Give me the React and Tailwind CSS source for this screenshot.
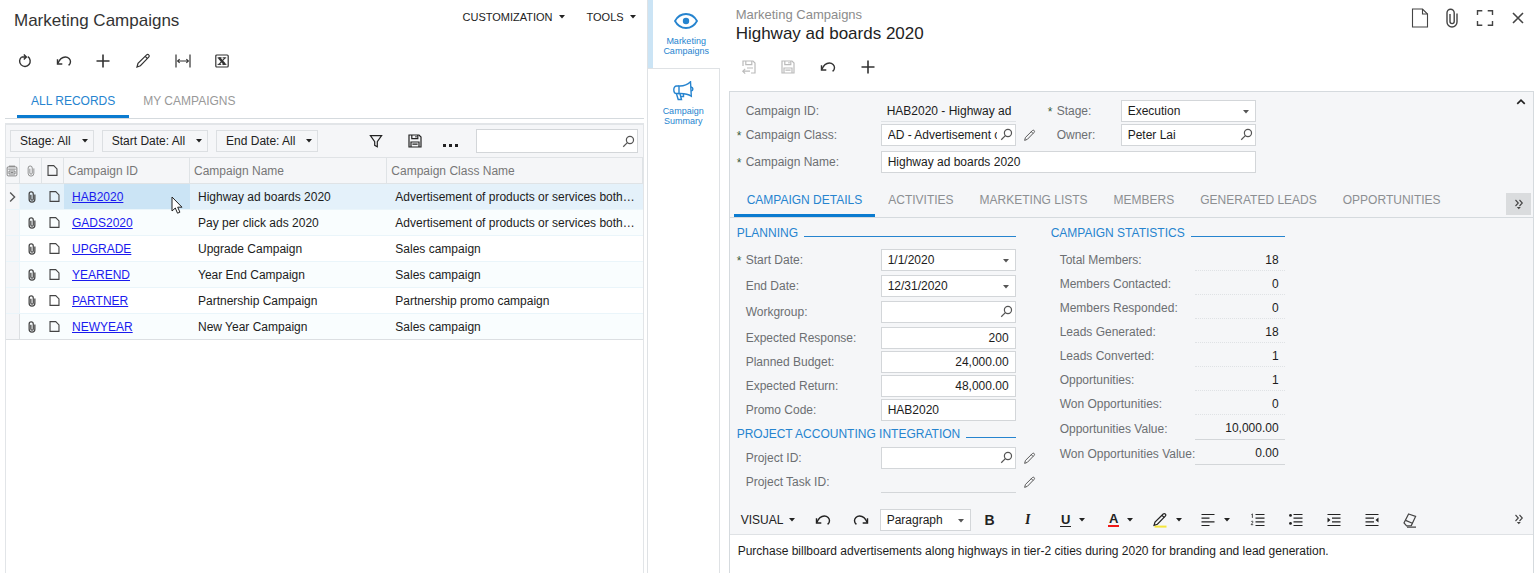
import { useState } from "react"

const campaigns = [
  { id: "HAB2020", name: "Highway ad boards 2020", className: "Advertisement of products or services both…" },
  { id: "GADS2020", name: "Pay per click ads 2020", className: "Advertisement of products or services both…" },
  { id: "UPGRADE", name: "Upgrade Campaign", className: "Sales campaign" },
  { id: "YEAREND", name: "Year End Campaign", className: "Sales campaign" },
  { id: "PARTNER", name: "Partnership Campaign", className: "Partnership promo campaign" },
  { id: "NEWYEAR", name: "New Year Campaign", className: "Sales campaign" },
]

const statistics = [
  { label: "Total Members", value: "18" },
  { label: "Members Contacted", value: "0" },
  { label: "Members Responded", value: "0" },
  { label: "Leads Generated", value: "18" },
  { label: "Leads Converted", value: "1" },
  { label: "Opportunities", value: "1" },
  { label: "Won Opportunities", value: "0" },
  { label: "Opportunities Value", value: "10,000.00", solid: true },
  { label: "Won Opportunities Value", value: "0.00", solid: true },
]

const detailTabs = ["CAMPAIGN DETAILS", "ACTIVITIES", "MARKETING LISTS", "MEMBERS", "GENERATED LEADS", "OPPORTUNITIES"]

/* Icons */

const Icon = ({ size = 16, className = "", children, sw = 1.2 }) => (
  <svg
    width={size}
    height={size}
    viewBox="0 0 16 16"
    fill="none"
    stroke="currentColor"
    strokeWidth={sw}
    className={`shrink-0 ${className}`}
    aria-hidden="true"
  >
    {children}
  </svg>
)

const Caret = ({ className = "" }) => (
  <svg width="6" height="4" viewBox="0 0 6 4" fill="currentColor" className={`shrink-0 ${className}`} aria-hidden="true">
    <path d="M0 0h6L3 3.6z" />
  </svg>
)

const RefreshIcon = () => (
  <Icon sw={1.4}>
    <path d="M4.600 4A5.300 5.300 0 1 0 10.800 3.700" />
    <path d="M4.600 4h4.600M6.800 1.400l2.600 2.600-2.600 2.600" />
  </Icon>
)

const UndoIcon = () => (
  <Icon sw={1.4}>
    <path d="M1.800 10.600C3.600 6 6.600 4 9.400 4c3 0 5.100 2.300 5.100 4.700 0 1.500-.7 2.700-1.900 3.700" />
    <path d="M1.500 6.300v4.700h4.800" />
  </Icon>
)

const RedoIcon = () => (
  <Icon sw={1.4}>
    <path d="M14.200 10.600C12.400 6 9.400 4 6.600 4c-3 0-5.100 2.300-5.100 4.700 0 1.500.7 2.700 1.900 3.700" />
    <path d="M14.500 6.300v4.700H9.700" />
  </Icon>
)

const PlusIcon = () => (
  <Icon sw={1.6}>
    <path d="M8 1.500v13M1.500 8h13" />
  </Icon>
)

const PencilIcon = ({ size = 16, className = "" }) => (
  <Icon size={size} className={className}>
    <path d="M2 14l1-3.600L11.600 1.900c.7-.6 1.500-.6 2.100 0 .7.6.7 1.500 0 2.200L5.400 12.700z" />
    <path d="M10.200 3.300l2.200 2.200" />
  </Icon>
)

const FitIcon = () => (
  <Icon>
    <path d="M1 1.500v13M15 1.500v13M2.500 8h11" />
    <path d="M4.600 6.200L2.800 8l1.800 1.800M11.400 6.200L13.200 8l-1.800 1.800" />
  </Icon>
)

const ExcelIcon = () => (
  <Icon>
    <rect x="1.800" y="2" width="12.400" height="12" rx="1" />
    <path d="M5 4.800l5.800 6.600" strokeWidth="2.400" />
    <path d="M11 4.800L5 11.400" />
    <path d="M3.600 4.800h4M8.600 4.800h3.600M3.600 11.400h3.600M8.400 11.400h4" strokeWidth="1" />
  </Icon>
)

const FunnelIcon = () => (
  <Icon>
    <path d="M2.400 2.600h11.200L9.300 8.600v5.200l-2.600-1.400V8.600z" />
  </Icon>
)

const SaveIcon = () => (
  <Icon>
    <path d="M2 2h10l2 2v10H2z" />
    <path d="M4.800 2v3.600h6V2M4 14V9h8v5M5.400 11.200h5.200M9 3v1.600" />
  </Icon>
)

const SaveCloseIcon = () => (
  <Icon>
    <path d="M2 7V2h10l2 2v10h-4" />
    <path d="M4.800 2v3.600h6V2M12 9H6" />
    <path d="M9 12.200H2M4.200 9.800L1.800 12.200l2.400 2.400" />
  </Icon>
)

const SearchIcon = ({ className = "" }) => (
  <Icon size={13} sw={1.5} className={className}>
    <circle cx="9.800" cy="6.200" r="4.400" />
    <path d="M6.600 9.400L1.500 14.500" />
  </Icon>
)

const ClipIcon = ({ large, sw = 1.4 }) => (
  <svg
    width={large ? 14 : 8}
    height={large ? 20 : 12}
    viewBox="0 0 14 20"
    fill="none"
    stroke="currentColor"
    strokeWidth={sw}
    className="shrink-0"
    aria-hidden="true"
  >
    <path d="M12 5.500V14a5 5 0 0 1-10 0V4.800a3.600 3.600 0 0 1 7.200 0v8.700a2.100 2.100 0 0 1-4.200 0V6" />
  </svg>
)

const NoteIcon = () => (
  <Icon size={13} sw={1.4}>
    <path d="M2.500 2h7L13.500 6v8h-11z" />
  </Icon>
)

const PageIcon = () => (
  <svg width="18" height="20" viewBox="0 0 18 20" fill="none" stroke="currentColor" strokeWidth="1.1" aria-hidden="true">
    <path d="M1.500 1h10l5 5v13h-15z" />
    <path d="M11.500 1v5h5" />
  </svg>
)

const ExpandIcon = () => (
  <svg width="18" height="18" viewBox="0 0 18 18" fill="none" stroke="currentColor" strokeWidth="1.400" aria-hidden="true">
    <path d="M1.500 6V1.800h4.800M11.700 1.800h4.800V6M16.500 12v4.200h-4.800M6.300 16.200H1.500V12" />
  </svg>
)

const CloseIcon = () => (
  <Icon sw={1.6}>
    <path d="M3 3l10 10M13 3L3 13" />
  </Icon>
)

const MoreIcon = () => (
  <svg width="10" height="11" viewBox="0 0 10 11" fill="none" stroke="currentColor" strokeWidth="1.1" aria-hidden="true">
    <path d="M1.500 1l2.800 3-2.800 3M5.500 1l2.800 3-2.800 3" />
    <path d="M2.800 8h4L4.800 10.300z" fill="currentColor" stroke="none" />
  </svg>
)

const ColumnsIcon = () => (
  <Icon size={12}>
    <rect x="1.500" y="2.500" width="13" height="12" rx="1.500" />
    <path d="M3 5.500h10M4 1.500h8M4 8h8v4H4zM6 10h4" />
  </Icon>
)

const EyeIcon = () => (
  <svg width="24" height="18" viewBox="0 0 24 18" fill="none" stroke="currentColor" strokeWidth="1.800" aria-hidden="true">
    <path d="M1 9C3.600 4.300 7.600 2 12 2s8.400 2.300 11 7c-2.600 4.700-6.600 7-11 7S3.600 13.700 1 9z" />
    <circle cx="12" cy="9" r="3.200" fill="currentColor" stroke="none" />
  </svg>
)

const MegaphoneIcon = () => (
  <svg width="22" height="20" viewBox="0 0 22 20" fill="none" stroke="currentColor" strokeWidth="1.400" aria-hidden="true">
    <path d="M7 5c4.500.2 8.500-1.200 11.500-4.200l.8 14.400C16 12.900 12 12.300 7 12.500z" />
    <path d="M7 5H4.600C2.800 5 1.800 6.700 1.800 8.700s1 3.800 2.800 3.800H7" />
    <path d="M4.400 12.500l1.800 6h3.300l-1.600-6M11.500 12.500v3H8.800M19 6c1.400.3 1.900 1.100 1.900 2s-.5 1.700-1.700 2" />
  </svg>
)

const AlignIcon = () => (
  <Icon>
    <path d="M1.500 2.500h13M1.500 6.200h8M1.500 9.800h13M1.500 13.500h8" />
  </Icon>
)

const NumberListIcon = () => (
  <Icon>
    <path d="M5.500 2.500h9M5.500 6.200h9M5.500 9.800h9M5.500 13.500h9" />
    <path d="M1.400 2.600l1-.7v4M1.200 9.800c.4-1 2-.8 1.800.3-.2.900-1.800 1.500-1.800 2.600h2" strokeWidth=".8" />
  </Icon>
)

const BulletListIcon = () => (
  <Icon>
    <path d="M5.500 2.500h9M5.500 6.200h9M5.500 9.800h9M5.500 13.500h9" />
    <circle cx="2.500" cy="3.400" r="1.400" fill="currentColor" stroke="none" />
    <circle cx="2.500" cy="11.400" r="1.400" fill="currentColor" stroke="none" />
  </Icon>
)

const IndentIcon = () => (
  <Icon>
    <path d="M1.500 2.500h13M6 6.200h8.500M6 9.800h8.500M1.500 13.500h13" />
    <path d="M1.500 5.600L4.500 8l-3 2.400z" fill="currentColor" stroke="none" />
  </Icon>
)

const OutdentIcon = () => (
  <Icon>
    <path d="M1.500 2.500h13M1.500 6.200h8.500M1.500 9.800h8.500M1.500 13.500h13" />
    <path d="M14.500 5.600L11.500 8l3 2.400z" fill="currentColor" stroke="none" />
  </Icon>
)

const EraserIcon = () => (
  <Icon>
    <path d="M6.600 2l7 2.400-4.300 9.200-4.700.2L2 11z" />
    <path d="M3.600 8.400l6.800 2.800M5 15.200h9" />
  </Icon>
)

const HighlightIcon = () => (
  <Icon>
    <path d="M2.500 14.600h12" stroke="#f5e63c" strokeWidth="2" />
    <path d="M2 13.400l1-3.400L11.200 2c.7-.6 1.500-.6 2.100 0 .7.600.7 1.500 0 2.200L5.400 12.200z" />
    <path d="M10 3.300l2.200 2.200" />
  </Icon>
)

const PointerIcon = () => (
  <svg width="13" height="19" viewBox="0 0 13 19" className="pointer-events-none absolute top-3 right-1.5 z-10" aria-hidden="true">
    <path d="M1 1v14l3.300-3 2.200 5.200 2.400-1-2.200-5H11z" fill="#fff" stroke="#222" />
  </svg>
)

/* Form parts */

const fieldBox = "h-[22px] border border-[#d3d6d9] bg-white px-1.5 text-[#1c1c1c] outline-none"

const IconButton = ({ label, className = "", children, ...rest }) => (
  <button type="button" aria-label={label} className={`flex shrink-0 items-center justify-center ${className}`} {...rest}>
    {children}
  </button>
)

const FieldLabel = ({ htmlFor, required, className = "w-36", children }) => (
  <label htmlFor={htmlFor} className={`flex shrink-0 items-center text-[#6c6f72] ${className}`}>
    <span className="w-[9px] pt-0.5 text-[#3c5c3c]">{required ? "*" : ""}</span>
    {children}:
  </label>
)

const TextField = ({ id, value, align = "", search, caret, className = "w-[135px]" }) => (
  <div className={`relative shrink-0 ${className}`}>
    <input id={id} type="text" defaultValue={value} className={`${fieldBox} block w-full ${search || caret ? "pr-[18px]" : ""} ${align}`} />
    {search && <SearchIcon className="absolute top-1 right-[3px] text-[#555]" />}
    {caret && <Caret className="absolute top-[10px] right-[7px] text-[#555]" />}
  </div>
)

const SelectField = ({ id, label, options, className }) => (
  <div className={`relative shrink-0 ${className}`}>
    <select id={id} aria-label={label} className={`${fieldBox} block w-full appearance-none`}>
      {options.map((option) => (
        <option key={option}>{option}</option>
      ))}
    </select>
    <Caret className="pointer-events-none absolute top-[10px] right-[7px] text-[#555]" />
  </div>
)

const SectionTitle = ({ className, children }) => (
  <h3 className={`flex items-center gap-1.5 whitespace-nowrap text-[#2684cf] ${className}`}>
    {children}
    <span className="mt-1.5 h-px flex-1 bg-[#2684cf]" />
  </h3>
)

const FormRow = ({ className = "h-6", children }) => <div className={`flex items-center ${className}`}>{children}</div>

/* Campaign list */

const CampaignTable = () => (
  <table className="w-full table-fixed border-separate border-spacing-0 text-left">
    <colgroup>
      <col className="w-[14px]" />
      <col className="w-[22px]" />
      <col className="w-[22px]" />
      <col className="w-[126px]" />
      <col className="w-[31%]" />
      <col />
    </colgroup>
    <thead>
      <tr className="h-[26px] bg-[#f5f6f8] text-[#777] [&>th]:border-r [&>th]:border-b [&>th]:border-[#dfe3e6]">
        <th aria-label="Columns">
          <ColumnsIcon />
        </th>
        <th aria-label="Files">
          <div className="flex justify-center">
            <ClipIcon />
          </div>
        </th>
        <th aria-label="Notes">
          <div className="flex justify-center text-[#444]">
            <NoteIcon />
          </div>
        </th>
        <th className="pl-1 font-normal">Campaign ID</th>
        <th className="pl-1 font-normal">Campaign Name</th>
        <th className="pl-1 font-normal">Campaign Class Name</th>
      </tr>
    </thead>
    <tbody className="text-[#1c1c1c]">
      {campaigns.map((campaign, index) => {
        const active = index === 0
        return (
          <tr
            key={campaign.id}
            className={`h-[26px] [&>td]:border-b [&>td]:border-[#eaf5fa] last:[&>td]:border-[#dcdfe2] ${
              active ? "bg-[#e4f1fa]" : index % 2 ? "bg-[#f9fdfe]" : "bg-white"
            }`}
          >
            <td className="border-r border-r-[#dfe3e6] bg-[#f5f6f8]">
              {active && (
                <Icon size={12} sw={1.8} className="text-[#555]">
                  <path d="M5.500 2l6 6-6 6" />
                </Icon>
              )}
            </td>
            <td>
              <div className="flex justify-center pl-0.5 text-[#444]">
                <ClipIcon sw={2.2} />
              </div>
            </td>
            <td>
              <div className="flex justify-center pl-0.5 text-[#444]">
                <NoteIcon />
              </div>
            </td>
            <td className={`relative pl-2 ${active ? "bg-[#cbe4f5]" : ""}`}>
              <a href={`#${campaign.id}`} className="text-[#1a1aee] underline">
                {campaign.id}
              </a>
              {active && <PointerIcon />}
            </td>
            <td className="truncate pl-2">{campaign.name}</td>
            <td className="pl-2 whitespace-nowrap">{campaign.className}</td>
          </tr>
        )
      })}
    </tbody>
  </table>
)

const CampaignList = () => {
  const [tab, setTab] = useState("ALL RECORDS")

  return (
    <section className="flex w-[42.1%] shrink-0 flex-col pr-[3px] pl-[5px]">
      <header className="flex h-[42px] justify-between pr-2 pl-[9px]">
        <h1 className="pt-2 text-[17px] leading-[26px] text-[#333]">Marketing Campaigns</h1>
        <nav className="flex gap-[22px] pt-[9px] text-[11px] text-[#222]">
          {["CUSTOMIZATION", "TOOLS"].map((item) => (
            <button key={item} type="button" className="flex h-4 items-center gap-1.5">
              {item}
              <Caret />
            </button>
          ))}
        </nav>
      </header>

      <div className="flex h-[38px] text-[#333]">
        <IconButton label="Refresh" className="w-[39px]"><RefreshIcon /></IconButton>
        <IconButton label="Undo" className="w-[39px]"><UndoIcon /></IconButton>
        <IconButton label="Add" className="w-10"><PlusIcon /></IconButton>
        <IconButton label="Edit" className="w-10"><PencilIcon /></IconButton>
        <IconButton label="Fit columns" className="w-[39px]"><FitIcon /></IconButton>
        <IconButton label="Export to Excel" className="w-10"><ExcelIcon /></IconButton>
      </div>

      <div className="flex h-[39px] border-b border-[#d5dade] pl-3">
        {["ALL RECORDS", "MY CAMPAIGNS"].map((item) => (
          <button
            key={item}
            type="button"
            onClick={() => setTab(item)}
            className={`border-b-3 px-3.5 pt-1.5 ${tab === item ? "border-[#0b7bd0] text-[#2684cf]" : "border-transparent text-[#999]"}`}
          >
            {item}
          </button>
        ))}
      </div>

      <div className="mt-1 flex-1 border-x border-t-2 border-[#e2e5e8]">
        <div className="flex items-center border-b border-[#e0e3e6] bg-[#f5f6f8] py-1 pr-[5px] pl-1 text-[#222]">
          <div className="flex gap-2">
            {["Stage: All", "Start Date: All", "End Date: All"].map((item) => (
              <button key={item} type="button" className="flex h-[22px] items-center gap-[11px] border border-[#dcdfe2] pr-[5px] pl-[9px]">
                {item}
                <Caret />
              </button>
            ))}
          </div>
          <div className="ml-auto flex items-center">
            <IconButton label="Filter" className="w-10"><FunnelIcon /></IconButton>
            <IconButton label="Save filter" className="w-[38px]"><SaveIcon /></IconButton>
            <IconButton label="More" className="w-[34px] pt-2">
              <svg width="15" height="3" viewBox="0 0 15 3" fill="currentColor" aria-hidden="true">
                <path d="M0 0h3v3H0zM6 0h3v3H6zM12 0h3v3h-3z" />
              </svg>
            </IconButton>
          </div>
          <div className="relative ml-2 w-[162px]">
            <input type="search" aria-label="Search" className="block h-6 w-full border border-[#d3d6d9] bg-white pr-6 pl-1.5 outline-none" />
            <SearchIcon className="absolute top-1.5 right-[3px] text-[#555]" />
          </div>
        </div>
        <CampaignTable />
      </div>
    </section>
  )
}

/* Side panel switcher */

const SidePanel = () => (
  <aside className="flex w-[73px] shrink-0 flex-col border-l border-[#dfe2e5] text-center text-[9px] leading-[10px] text-[#2684cf]">
    <button type="button" className="flex h-[68px] flex-col items-center border-l-5 border-[#cbe4f5] pt-3">
      <EyeIcon />
      <span className="pt-1.5">Marketing Campaigns</span>
    </button>
    <div className="flex flex-1 flex-col border-t border-r border-[#dfe2e5]">
      <button type="button" className="flex flex-col items-center px-3 pt-3">
        <MegaphoneIcon />
        <span className="pt-[5px]">Campaign Summary</span>
      </button>
    </div>
  </aside>
)

/* Campaign form */

const SummaryForm = () => (
  <div className="relative pt-[7px] pl-[7px]">
    <IconButton label="Collapse" className="absolute top-0 right-1 h-5 w-4 text-[#222]">
      <Icon size={12} sw={2.2}>
        <path d="M3 10.500l5-5 5 5" />
      </Icon>
    </IconButton>
    <FormRow>
      <FieldLabel htmlFor="campaign-id">Campaign ID</FieldLabel>
      <input
        id="campaign-id"
        readOnly
        defaultValue="HAB2020 - Highway ad"
        className="h-[22px] w-[135px] border-b border-[#e0e3e6] pl-1.5 text-[#1c1c1c] outline-none"
      />
      <FieldLabel htmlFor="stage" required className="ml-8 w-[73px]">Stage</FieldLabel>
      <SelectField id="stage" options={["Execution"]} className="w-[135px]" />
    </FormRow>
    <FormRow>
      <FieldLabel htmlFor="campaign-class" required>Campaign Class</FieldLabel>
      <TextField id="campaign-class" value="AD - Advertisement of products" search />
      <IconButton label="Edit campaign class" className="w-7 text-[#555]"><PencilIcon size={13} /></IconButton>
      <FieldLabel htmlFor="owner" className="ml-1 w-[73px]">Owner</FieldLabel>
      <TextField id="owner" value="Peter Lai" search />
    </FormRow>
    <FormRow className="h-[30px]">
      <FieldLabel htmlFor="campaign-name" required>Campaign Name</FieldLabel>
      <TextField id="campaign-name" value="Highway ad boards 2020" className="w-[375px]" />
    </FormRow>
  </div>
)

const DetailTabs = () => {
  const [tab, setTab] = useState(detailTabs[0])

  return (
    <div className="mt-[7px] flex h-[34px] border-b border-[#d5dade] pr-[2px] pl-1">
      {detailTabs.map((item) => (
        <button
          key={item}
          type="button"
          onClick={() => setTab(item)}
          className={`border-b-3 px-[13px] pt-0.5 whitespace-nowrap ${
            tab === item ? "border-[#0b7bd0] text-[#2684cf]" : "border-transparent text-[#8c8f92]"
          }`}
        >
          {item}
        </button>
      ))}
      <IconButton label="More tabs" className="mt-[9px] ml-auto h-[22px] w-[25px] bg-[#dadcde] text-[#444]"><MoreIcon /></IconButton>
    </div>
  )
}

const PlanningColumn = () => (
  <div className="w-[314px] shrink-0">
    <SectionTitle className="h-[30px] w-[279px]">PLANNING</SectionTitle>
    <FormRow className="h-[26px] pb-0.5">
      <FieldLabel htmlFor="start-date" required>Start Date</FieldLabel>
      <TextField id="start-date" value="1/1/2020" caret />
    </FormRow>
    <FormRow className="h-[26px] pb-0.5">
      <FieldLabel htmlFor="end-date">End Date</FieldLabel>
      <TextField id="end-date" value="12/31/2020" caret />
    </FormRow>
    <FormRow className="h-[26px] pb-0.5">
      <FieldLabel htmlFor="workgroup">Workgroup</FieldLabel>
      <TextField id="workgroup" search />
    </FormRow>
    <FormRow>
      <FieldLabel htmlFor="expected-response">Expected Response</FieldLabel>
      <TextField id="expected-response" value="200" align="text-right" />
    </FormRow>
    <FormRow>
      <FieldLabel htmlFor="planned-budget">Planned Budget</FieldLabel>
      <TextField id="planned-budget" value="24,000.00" align="text-right" />
    </FormRow>
    <FormRow>
      <FieldLabel htmlFor="expected-return">Expected Return</FieldLabel>
      <TextField id="expected-return" value="48,000.00" align="text-right" />
    </FormRow>
    <FormRow>
      <FieldLabel htmlFor="promo-code">Promo Code</FieldLabel>
      <TextField id="promo-code" value="HAB2020" />
    </FormRow>
    <SectionTitle className="h-6 w-[279px]">PROJECT ACCOUNTING INTEGRATION</SectionTitle>
    <FormRow>
      <FieldLabel htmlFor="project-id">Project ID</FieldLabel>
      <TextField id="project-id" search />
      <IconButton label="Edit project" className="w-7 text-[#555]"><PencilIcon size={13} /></IconButton>
    </FormRow>
    <FormRow>
      <FieldLabel htmlFor="project-task">Project Task ID</FieldLabel>
      <input id="project-task" readOnly className="h-[22px] w-[135px] border-b border-[#d3d6d9] px-1.5 outline-none" />
      <IconButton label="Edit project task" className="w-7 text-[#555]"><PencilIcon size={13} /></IconButton>
    </FormRow>
  </div>
)

const StatisticsColumn = () => (
  <div className="w-[234px] shrink-0">
    <SectionTitle className="h-[30px]">CAMPAIGN STATISTICS</SectionTitle>
    <dl>
      {statistics.map((item) => (
        <div key={item.label} className={`flex items-center ${item.solid ? "h-[25px]" : "h-6"}`}>
          <dt className="w-36 whitespace-nowrap pl-[9px] text-[#6c6f72]">{item.label}:</dt>
          <dd
            className={`flex h-[22px] flex-1 items-center justify-end border-b pr-1.5 text-[#1c1c1c] ${
              item.solid ? "border-[#d3d6d9]" : "border-dotted border-[#dfe2e5]"
            }`}
          >
            {item.value}
          </dd>
        </div>
      ))}
    </dl>
  </div>
)

const EditorToolbar = () => (
  <div className="flex h-[30px] items-center border-b border-[#dfe2e5] pl-[11px] text-[#222]">
    <button type="button" className="flex w-[63px] items-center gap-1.5">
      VISUAL
      <Caret />
    </button>
    <IconButton label="Undo" className="w-[38px]"><UndoIcon /></IconButton>
    <IconButton label="Redo" className="w-[38px]"><RedoIcon /></IconButton>
    <SelectField label="Paragraph style" options={["Paragraph"]} className="w-[91px]" />
    <IconButton label="Bold" className="w-[38px] text-sm font-bold">B</IconButton>
    <IconButton label="Italic" className="w-[38px] font-serif text-sm font-bold italic">I</IconButton>
    <IconButton label="Underline" className="w-12 gap-2 pl-1 text-[13px] font-bold">
      <span className="w-[11px] border-b border-[#222] leading-[13px]">U</span>
      <Caret />
    </IconButton>
    <IconButton label="Text color" className="w-12 gap-2 pl-1 text-[13px] font-bold">
      <span className="w-[11px] border-b-2 border-[#f01818] leading-[13px]">A</span>
      <Caret />
    </IconButton>
    <IconButton label="Highlight" className="w-12 gap-2"><HighlightIcon /><Caret /></IconButton>
    <IconButton label="Align" className="w-12 gap-2"><AlignIcon /><Caret /></IconButton>
    <IconButton label="Numbered list" className="w-[38px]"><NumberListIcon /></IconButton>
    <IconButton label="Bulleted list" className="w-[38px]"><BulletListIcon /></IconButton>
    <IconButton label="Increase indent" className="w-[38px]"><IndentIcon /></IconButton>
    <IconButton label="Decrease indent" className="w-[38px]"><OutdentIcon /></IconButton>
    <IconButton label="Clear formatting" className="w-[38px] text-[#444]"><EraserIcon /></IconButton>
    <IconButton label="More tools" className="ml-auto w-[29px] text-[#444]"><MoreIcon /></IconButton>
  </div>
)

const CampaignForm = () => (
  <main className="flex min-w-0 flex-1 flex-col pr-[2px] pl-[9px]">
    <header className="flex h-[47px] justify-between pl-[7px]">
      <div className="pt-[7px]">
        <p className="text-[13px] leading-4 text-[#8c8c8c]">Marketing Campaigns</p>
        <h2 className="text-[17px] leading-[22px] text-[#222]">Highway ad boards 2020</h2>
      </div>
      <div className="flex h-9 text-[#444]">
        <IconButton label="Notes" className="w-8"><PageIcon /></IconButton>
        <IconButton label="Files" className="w-8"><ClipIcon large /></IconButton>
        <IconButton label="Full screen" className="w-[34px]"><ExpandIcon /></IconButton>
        <IconButton label="Close" className="w-8"><CloseIcon /></IconButton>
      </div>
    </header>

    <div className="flex h-11 pb-[5px] text-[#333]">
      <IconButton label="Save and close" className="w-10 text-[#bbb]"><SaveCloseIcon /></IconButton>
      <IconButton label="Save" className="w-[39px] text-[#bbb]"><SaveIcon /></IconButton>
      <IconButton label="Undo" className="w-10"><UndoIcon /></IconButton>
      <IconButton label="Add" className="w-10"><PlusIcon /></IconButton>
    </div>

    <div className="flex flex-1 flex-col border border-b-0 border-[#d5dade] bg-[#f5f6f8]">
      <SummaryForm />
      <DetailTabs />
      <div className="flex pb-[11px] pl-[7px]">
        <PlanningColumn />
        <StatisticsColumn />
      </div>
      <EditorToolbar />
      <div className="flex-1 bg-white px-2 pt-2 leading-4 text-[#1c1c1c]">
        Purchase billboard advertisements along highways in tier-2 cities during 2020 for branding and lead generation.
      </div>
    </div>
  </main>
)

const App = () => (
  <div className="flex min-h-screen bg-white font-['Liberation_Sans',Arial,sans-serif] text-xs">
    <CampaignList />
    <SidePanel />
    <CampaignForm />
  </div>
)

export default App
